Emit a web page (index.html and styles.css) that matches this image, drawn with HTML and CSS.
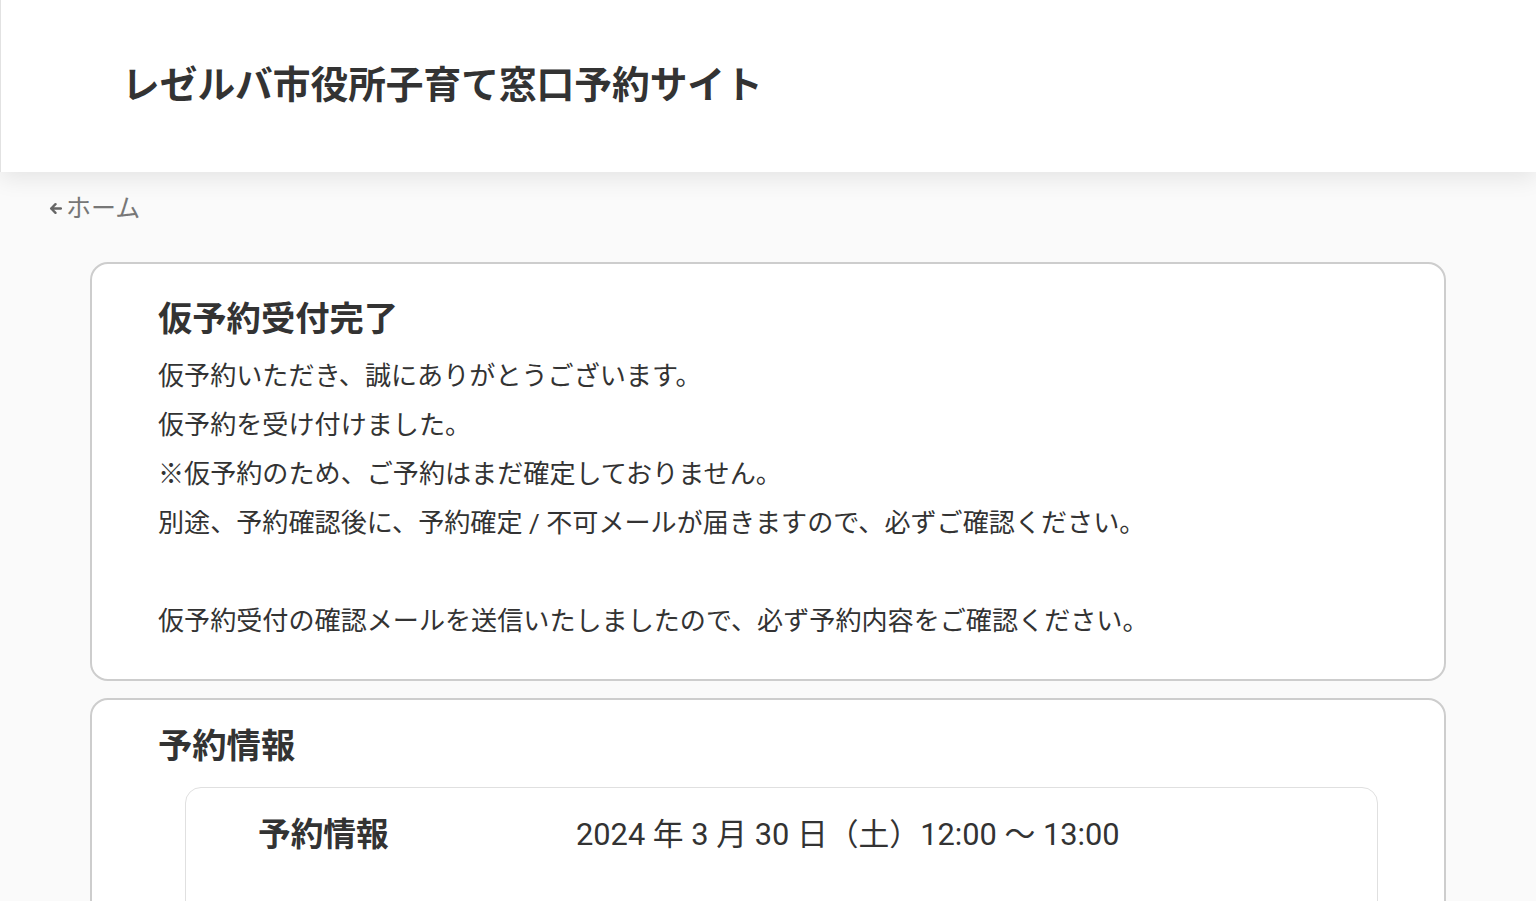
FILE: index.html
```html
<!DOCTYPE html>
<html lang="ja">
<head>
<meta charset="utf-8">
<title>レゼルバ市役所子育て窓口予約サイト</title>
<link rel="stylesheet" href="styles.css">
</head>
<body>
<header class="site-header">
  <h1 class="site-title">レゼルバ市役所子育て窓口予約サイト</h1>
</header>
<nav class="breadcrumb">
  <a class="back-link" href="#"><svg class="back-icon" viewBox="0 0 12 12" width="13" height="13"><path d="M6 2 L2 6 L6 10 M2 6 H11" fill="none" stroke="#666" stroke-width="2.2" stroke-linecap="round" stroke-linejoin="round"/></svg>ホーム</a>
</nav>
<main class="content">
  <section class="card card-done">
    <h2 class="card-title">仮予約受付完了</h2>
    <div class="message">
      <p>仮予約いただき、誠にありがとうございます。</p>
      <p>仮予約を受け付けました。</p>
      <p>※仮予約のため、ご予約はまだ確定しておりません。</p>
      <p>別途、予約確認後に、予約確定 / 不可メールが届きますので、必ずご確認ください。</p>
      <p class="blank">&nbsp;</p>
      <p>仮予約受付の確認メールを送信いたしましたので、必ず予約内容をご確認ください。</p>
    </div>
  </section>
  <section class="card card-info">
    <h2 class="card-title">予約情報</h2>
    <div class="info-box">
      <div class="info-row">
        <div class="info-label">予約情報</div>
        <div class="info-value">2024 年 3 月 30 日（土）12:00 ～ 13:00</div>
      </div>
    </div>
  </section>
</main>
</body>
</html>
```
FILE: styles.css
```css
html, body {
  margin: 0;
  padding: 0;
}
body {
  background: #fafafa;
  font-family: Roboto, "Noto Sans CJK JP", sans-serif;
  color: #333;
  height: 901px;
  overflow: hidden;
}
.site-header {
  background: #fff;
  height: 172px;
  border-left: 1px solid #e2e2e2;
  box-shadow: 0 6px 22px rgba(0, 0, 0, 0.09);
  display: flex;
  align-items: center;
  padding-left: 121px;
  box-sizing: border-box;
  position: relative;
  z-index: 1;
}
.site-title {
  margin: 0;
  font-size: 37.7px;
  font-weight: 700;
  color: #333;
  line-height: 1;
}
.breadcrumb {
  padding: 18px 0 0 49px;
  height: 74px;
  box-sizing: border-box;
}
.back-link {
  color: #777;
  text-decoration: none;
  font-size: 25px;
  display: inline-flex;
  align-items: center;
  line-height: 38px;
}
.back-icon {
  margin-right: 4px;
  margin-top: -2px;
}
.content {
  padding: 16px 90px 0;
  display: flex;
  flex-direction: column;
  gap: 17px;
}
.card {
  background: #fff;
  border: 2px solid #cdcdcd;
  border-radius: 18px;
  padding: 30px 66px 33px;
}
.card-title {
  margin: 0;
  font-size: 34.3px;
  font-weight: 700;
  line-height: 51px;
  color: #333;
}
.card-done .card-title {
  margin-bottom: 7px;
}
.message p {
  margin: 0;
  font-size: 26.1px;
  line-height: 49px;
}
.card-info {
  padding-top: 21px;
  padding-bottom: 120px;
}
.info-box {
  margin: 15px 0 0 27px;
  border: 1px solid #e0e0e0;
  border-radius: 16px;
  padding: 23px 72px 60px;
}
.info-row {
  display: flex;
  align-items: center;
}
.info-label {
  width: 318px;
  font-size: 32.7px;
  font-weight: 700;
  line-height: 48px;
}
.info-value {
  font-size: 30.8px;
  line-height: 48px;
}
```
